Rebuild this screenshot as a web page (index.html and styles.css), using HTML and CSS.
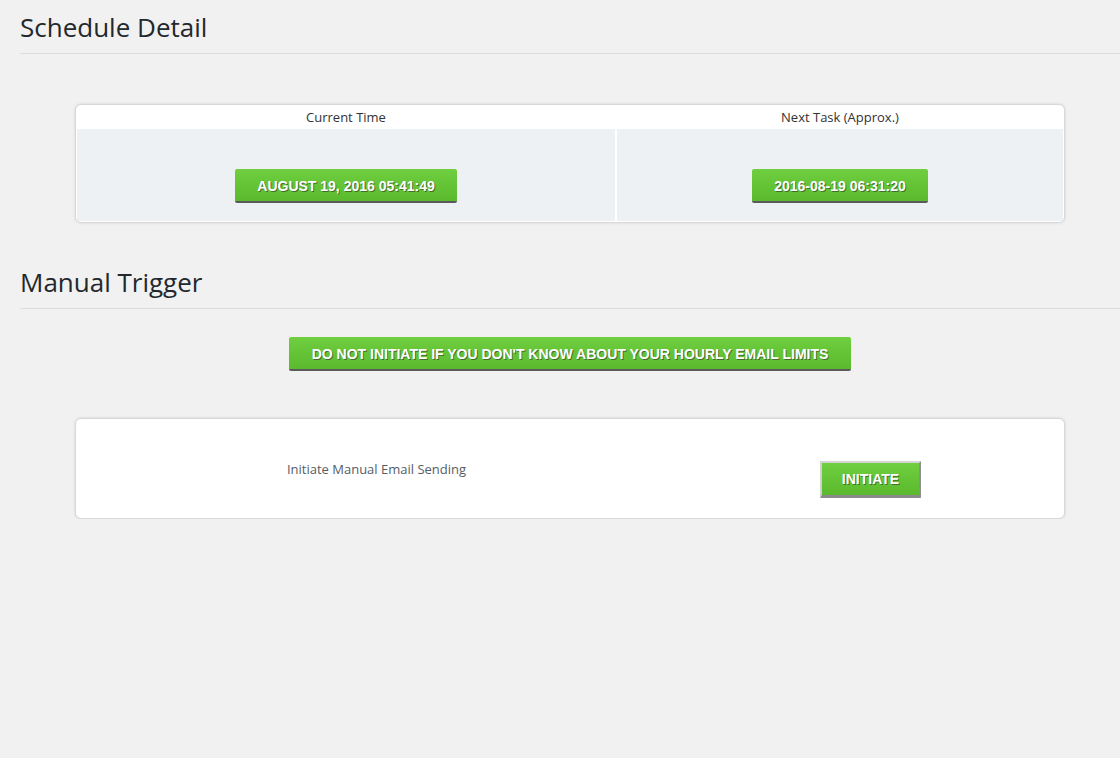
FILE: index.html
```html
<!DOCTYPE html>
<html>
<head>
<meta charset="utf-8">
<link rel="stylesheet" href="styles.css">
</head>
<body>
<div class="wrap">
  <h2 class="section-title">Schedule Detail</h2>
  <div class="card schedule">
    <div class="th">Current Time</div>
    <div class="th">Next Task (Approx.)</div>
    <div class="td"><span class="btn">AUGUST 19, 2016 05:41:49</span></div>
    <div class="td"><span class="btn">2016-08-19 06:31:20</span></div>
  </div>

  <h2 class="section-title second">Manual Trigger</h2>
  <div class="warn-row">
    <span class="btn">DO NOT INITIATE IF YOU DON'T KNOW ABOUT YOUR HOURLY EMAIL LIMITS</span>
  </div>
  <div class="card trigger">
    <div class="label">Initiate Manual Email Sending</div>
    <div class="action"><button class="btn initiate" type="button">INITIATE</button></div>
  </div>
</div>
</body>
</html>
```

FILE: styles.css
```css
html, body {
  margin: 0;
  padding: 0;
}
body {
  background: #f1f1f1;
  font-family: "Open Sans", "Noto Sans", sans-serif;
  color: #444;
}
.wrap {
  padding-left: 20px;
}
.section-title {
  margin: 0;
  padding: 9px 0 8px;
  line-height: 36px;
  font-size: 26px;
  font-weight: 400;
  color: #23282d;
  border-bottom: 1px solid #dcdcdc;
}
.section-title.second {
  margin-top: 32px;
}
.card {
  margin: 50px 55px 0 55px;
  background: #fff;
  border: 1px solid #d8d8d8;
  border-radius: 6px;
  box-shadow: 0 0 3px rgba(0, 0, 0, 0.12);
}
.schedule {
  display: grid;
  grid-template-columns: 538px 1fr;
  column-gap: 2px;
  padding: 0 1px 1px;
}
.th {
  height: 24px;
  line-height: 24px;
  text-align: center;
  font-size: 13px;
  color: #333;
}
.td {
  background: #eef1f4;
  height: 92px;
  padding-top: 40px;
  box-sizing: border-box;
  text-align: center;
}
.btn {
  display: inline-block;
  box-sizing: border-box;
  height: 34px;
  padding: 9px 22px 0;
  background: linear-gradient(#6fcf3f, #5bb92d);
  border: 0;
  border-bottom: 2px solid #5a5a5a;
  border-radius: 2px;
  color: #fff;
  font-family: "Liberation Sans", Arial, sans-serif;
  font-weight: 700;
  font-size: 14px;
  line-height: 16px;
  text-shadow: 1px 1px 0 rgba(40, 40, 40, 0.55);
  white-space: nowrap;
}
.warn-row {
  text-align: center;
  margin-top: 28px;
}
.warn-row .btn {
  padding-left: 23px;
  padding-right: 23px;
}
.trigger {
  margin-top: 47px;
  display: grid;
  grid-template-columns: 601px 1fr;
  align-items: center;
  height: 101px;
  box-sizing: border-box;
}
.label {
  text-align: center;
  font-size: 13px;
  color: #555d66;
}
.action {
  text-align: center;
}
.btn.initiate {
  margin-top: 21px;
  height: 37px;
  width: 101px;
  padding: 0;
  line-height: 33px;
  border-style: solid;
  border-width: 2px 2px 3px 2px;
  border-color: #d4d4d4 #8e8e8e #8a8a8a #d0d0d0;
  border-radius: 1px;
  cursor: pointer;
}
```
